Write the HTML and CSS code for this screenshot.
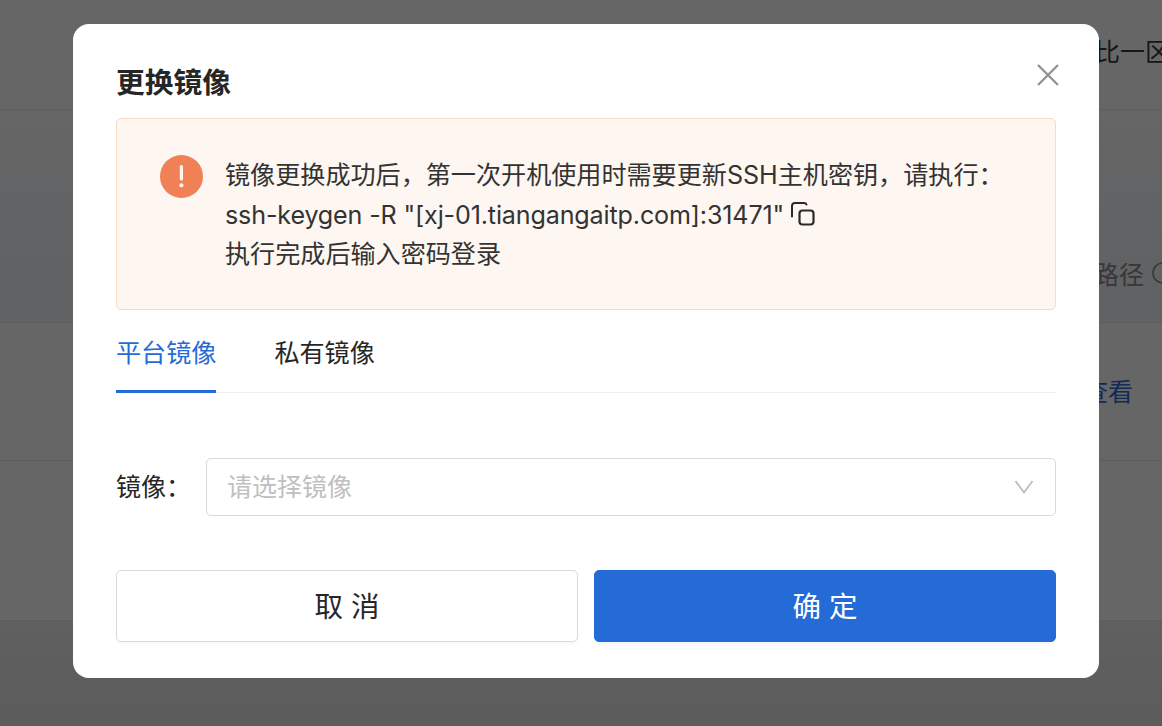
FILE: index.html
```html
<!DOCTYPE html>
<html lang="zh">
<head>
<meta charset="utf-8">
<title>更换镜像</title>
<link rel="stylesheet" href="styles.css">
</head>
<body>
<div class="page">
  <div class="row row-head"><span class="bg-text">比一区</span></div>
  <div class="row row-path"><span class="bg-text">路径</span>
    <svg class="bg-help" width="22" height="22" viewBox="0 0 22 22"><circle cx="11" cy="11" r="10" fill="none" stroke="currentColor" stroke-width="1.6"/></svg>
  </div>
  <div class="row row-action"><span class="bg-link">查看</span></div>
  <div class="row row-empty"></div>
  <div class="row-foot"></div>
</div>
<div class="overlay"></div>
<section class="modal">
  <h1 class="title">更换镜像</h1>
  <button class="close" aria-label="关闭">
    <svg width="24" height="24" viewBox="0 0 24 24"><path d="M2 2 L22 22 M22 2 L2 22" fill="none" stroke="#8f8f8f" stroke-width="2.2"/></svg>
  </button>
  <div class="alert">
    <svg class="alert-icon" width="43" height="43" viewBox="0 0 43 43"><circle cx="21.5" cy="21.500" r="21.500" fill="#f08055"/><rect x="19.800" y="10" width="3.200" height="15.500" rx="1.600" fill="#fff6f0"/><circle cx="21.400" cy="30.300" r="2.100" fill="#fff6f0"/></svg>
    <div class="alert-text">
      <p>镜像更换成功后，第一次开机使用时需要更新SSH主机密钥，请执行：</p>
      <p class="command">ssh-keygen -R "[xj-01.tiangangaitp.com]:31471"
        <svg class="copy" width="24" height="24" viewBox="0 0 24 24"><path d="M1 14.500 V4 Q1 1 4 1 H13 Q15 1 15.500 2.500" fill="none" stroke="#2b2b2b" stroke-width="2" stroke-linecap="round"/><rect x="8.500" y="8.500" width="14" height="14" rx="3" fill="#fff6f1" stroke="#2b2b2b" stroke-width="2.200"/></svg>
      </p>
      <p>执行完成后输入密码登录</p>
    </div>
  </div>
  <nav class="tabs">
    <span class="tab tab-active">平台镜像</span>
    <span class="tab">私有镜像</span>
  </nav>
  <div class="field">
    <label class="field-label">镜像：</label>
    <div class="select">
      <span class="placeholder">请选择镜像</span>
      <svg width="20" height="14" viewBox="0 0 20 14"><path d="M1.500 1 L10 12.500 L18.500 1" fill="none" stroke="#bdbdbd" stroke-width="1.800"/></svg>
    </div>
  </div>
  <div class="actions">
    <button class="btn btn-default">取 消</button>
    <button class="btn btn-primary">确 定</button>
  </div>
</section>
</body>
</html>
```
FILE: styles.css
```css
* { box-sizing: border-box; }
html, body { margin: 0; height: 100%; overflow: hidden; }
body {
  font-family: Inter, "Noto Sans CJK SC", sans-serif;
  color: #262626;
  background: #fff;
}
.page { height: 726px; display: flex; flex-direction: column; }
.row {
  display: flex;
  align-items: center;
  justify-content: flex-end;
  border-bottom: 1px solid #e8e8e8;
  font-size: 25px;
  color: #777;
}
.row-head { height: 110px; background: #fff; align-items: flex-start; padding-top: 32px; margin-right: -8px; overflow: hidden; }
.row-path { height: 213px; background: linear-gradient(#fefefe, #f4f7fb 55%, #f3f5f8); padding-top: 113px; gap: 8px; margin-right: -12px; }
.row-action { height: 138px; background: #fff; padding-right: 29px; padding-bottom: 4px; }
.row-empty { height: 160px; background: #fff; }
.row-foot { flex: 1; background: linear-gradient(#f0f0f0, #e6e6e6); }
.bg-text { color: #3a3a3a; }
.row-path .bg-text { color: #8a8a8a; }
.bg-help { color: #8a8a8a; }
.bg-link { color: #2a6bd8; }
.overlay { position: fixed; inset: 0; background: rgba(0, 0, 0, 0.6); }
.modal {
  position: fixed;
  left: 73px;
  top: 24px;
  width: 1026px;
  height: 654px;
  padding: 39px 43px 36px;
  background: #fff;
  border-radius: 16px;
  display: flex;
  flex-direction: column;
}
.title {
  margin: 0;
  font-size: 28.750px;
  line-height: 40px;
  font-weight: 600;
  color: #262626;
}
.close {
  position: absolute;
  top: 39px;
  right: 39px;
  width: 24px;
  height: 24px;
  padding: 0;
  border: 0;
  background: none;
  display: flex;
}
.alert {
  margin-top: 15px;
  height: 192px;
  padding: 36px 30px 0 43px;
  background: #fef6f1;
  border: 1px solid #f9dcc6;
  border-radius: 5px;
  display: flex;
  gap: 22px;
}
.alert-icon { flex: none; }
.alert-text { font-size: 25.100px; line-height: 39.500px; color: #333; margin-top: 1px; }
.alert-text p { margin: 0; white-space: nowrap; display: flex; align-items: center; gap: 8px; }
.command { letter-spacing: -0.140px; }
.copy { flex: none; margin-bottom: 3px; margin-left: -1px; }
.tabs {
  margin-top: 19px;
  height: 64px;
  display: flex;
  gap: 58px;
  border-bottom: 1px solid #ececec;
}
.tab { font-size: 25.100px; line-height: 48px; color: #262626; height: 64px; }
.tab-active { color: #256bd8; border-bottom: 3px solid #256bd8; }
.field { margin-top: 65px; display: flex; align-items: center; }
.field-label { width: 90px; font-size: 25px; color: #262626; padding-bottom: 4px; }
.select {
  flex: 1;
  height: 58px;
  padding: 0 21px 0 20px;
  border: 1px solid #d9d9d9;
  border-radius: 5px;
  display: flex;
  align-items: center;
  justify-content: space-between;
}
.placeholder { font-size: 25px; color: #bfbfbf; padding-bottom: 4px; }
.actions { margin-top: 54px; display: flex; gap: 16px; }
.btn {
  flex: 1;
  height: 72px;
  padding: 0 0 4px;
  border-radius: 5px;
  font: inherit;
  font-size: 28.500px;
}
.btn-default { background: #fff; border: 1px solid #d9d9d9; color: #262626; box-shadow: 0 3px 2px rgba(0, 0, 0, 0.02); }
.btn-primary { background: #256bd8; border: 1px solid #256bd8; color: #fff; box-shadow: 0 3px 2px rgba(0, 0, 0, 0.03); }
```
